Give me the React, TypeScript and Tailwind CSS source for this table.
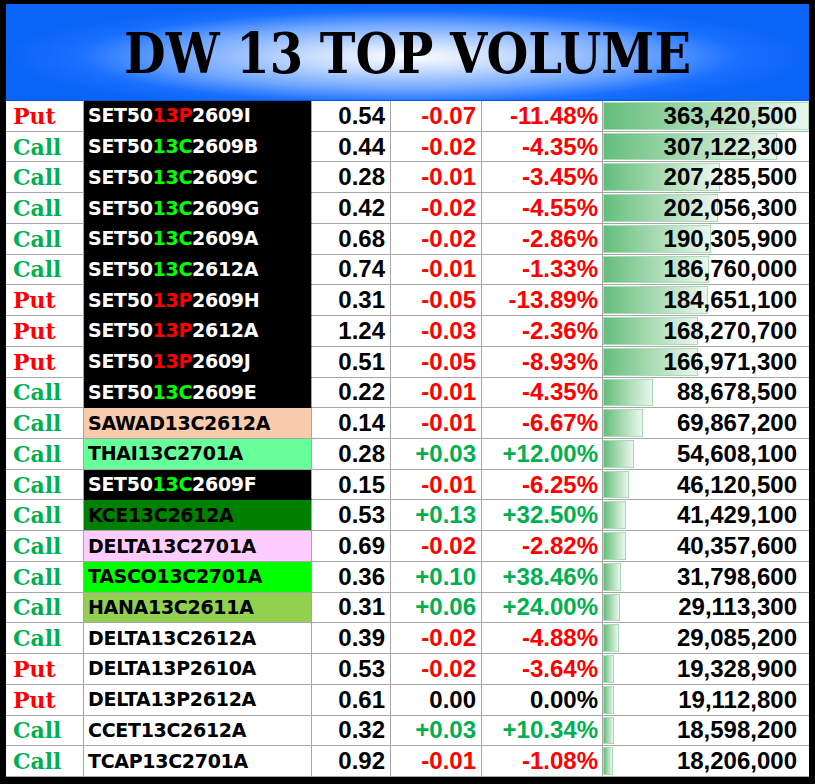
import React from 'react';

interface Row {
  type: 'Put' | 'Call';
  name: string;
  price: string;
  change: string;
  pct: string;
  volume: number;
  bg?: string;
}

const rows: Row[] = [
  { type: 'Put', name: 'SET5013P2609I', price: '0.54', change: '-0.07', pct: '-11.48%', volume: 363420500 },
  { type: 'Call', name: 'SET5013C2609B', price: '0.44', change: '-0.02', pct: '-4.35%', volume: 307122300 },
  { type: 'Call', name: 'SET5013C2609C', price: '0.28', change: '-0.01', pct: '-3.45%', volume: 207285500 },
  { type: 'Call', name: 'SET5013C2609G', price: '0.42', change: '-0.02', pct: '-4.55%', volume: 202056300 },
  { type: 'Call', name: 'SET5013C2609A', price: '0.68', change: '-0.02', pct: '-2.86%', volume: 190305900 },
  { type: 'Call', name: 'SET5013C2612A', price: '0.74', change: '-0.01', pct: '-1.33%', volume: 186760000 },
  { type: 'Put', name: 'SET5013P2609H', price: '0.31', change: '-0.05', pct: '-13.89%', volume: 184651100 },
  { type: 'Put', name: 'SET5013P2612A', price: '1.24', change: '-0.03', pct: '-2.36%', volume: 168270700 },
  { type: 'Put', name: 'SET5013P2609J', price: '0.51', change: '-0.05', pct: '-8.93%', volume: 166971300 },
  { type: 'Call', name: 'SET5013C2609E', price: '0.22', change: '-0.01', pct: '-4.35%', volume: 88678500 },
  { type: 'Call', name: 'SAWAD13C2612A', price: '0.14', change: '-0.01', pct: '-6.67%', volume: 69867200, bg: 'bg-[#f8cbad]' },
  { type: 'Call', name: 'THAI13C2701A', price: '0.28', change: '+0.03', pct: '+12.00%', volume: 54608100, bg: 'bg-[#66ff99]' },
  { type: 'Call', name: 'SET5013C2609F', price: '0.15', change: '-0.01', pct: '-6.25%', volume: 46120500 },
  { type: 'Call', name: 'KCE13C2612A', price: '0.53', change: '+0.13', pct: '+32.50%', volume: 41429100, bg: 'bg-[#008000]' },
  { type: 'Call', name: 'DELTA13C2701A', price: '0.69', change: '-0.02', pct: '-2.82%', volume: 40357600, bg: 'bg-[#ffccff]' },
  { type: 'Call', name: 'TASCO13C2701A', price: '0.36', change: '+0.10', pct: '+38.46%', volume: 31798600, bg: 'bg-[#00ff00]' },
  { type: 'Call', name: 'HANA13C2611A', price: '0.31', change: '+0.06', pct: '+24.00%', volume: 29113300, bg: 'bg-[#92d050]' },
  { type: 'Call', name: 'DELTA13C2612A', price: '0.39', change: '-0.02', pct: '-4.88%', volume: 29085200 },
  { type: 'Put', name: 'DELTA13P2610A', price: '0.53', change: '-0.02', pct: '-3.64%', volume: 19328900 },
  { type: 'Put', name: 'DELTA13P2612A', price: '0.61', change: '0.00', pct: '0.00%', volume: 19112800 },
  { type: 'Call', name: 'CCET13C2612A', price: '0.32', change: '+0.03', pct: '+10.34%', volume: 18598200 },
  { type: 'Call', name: 'TCAP13C2701A', price: '0.92', change: '-0.01', pct: '-1.08%', volume: 18206000 },
];

const maxVolume = Math.max(...rows.map((r) => r.volume));

const changeColor = (v: string) => {
  if (v.startsWith('+')) return 'text-[#00b050]';
  if (v.startsWith('-')) return 'text-[#ff0000]';
  return 'text-black';
};

const NameCell: React.FC<{ row: Row }> = ({ row }) => {
  const isSet50 = row.name.startsWith('SET50');
  if (isSet50) {
    const mid = row.name.slice(5, 8);
    return (
      <div className="flex items-center pl-[4px] bg-black border-r border-r-[#a6a6a6] border-b border-b-black text-white font-['DejaVu_Sans',sans-serif] font-bold text-[19px] tracking-[-0.3px]">
        <span>SET50</span>
        <span className={row.type === 'Put' ? 'text-[#ff0000]' : 'text-[#00ff00]'}>{mid}</span>
        <span>{row.name.slice(8)}</span>
      </div>
    );
  }
  return (
    <div
      className={`flex items-center pl-[4px] border-r border-b border-[#a6a6a6] text-black font-['DejaVu_Sans',sans-serif] font-bold text-[19px] tracking-[-0.3px] ${
        row.bg ?? 'bg-white'
      }`}
    >
      {row.name}
    </div>
  );
};

export default function App() {
  return (
    <div className="w-[815px] h-[784px] bg-black pt-[4px] pl-[6px] pr-[6px] pb-[7px] flex flex-col overflow-hidden">
      <div className="shrink-0 h-[97px] flex items-center justify-center border-b border-[#0a55d8] bg-[radial-gradient(ellipse_50%_58%_at_50%_55%,#ffffff_0%,#c4dafe_26%,#6fa6ff_58%,#1a70ff_82%,#0a64f5_100%)]">
        <h1 className="font-['DejaVu_Serif',serif] font-bold text-[48px] leading-none text-black scale-y-[1.15] mt-[2px]">
          DW 13 TOP VOLUME
        </h1>
      </div>
      <div className="flex-1 min-h-0 grid grid-rows-[repeat(22,minmax(0,1fr))] bg-white leading-none">
        {rows.map((row, i) => (
          <div key={i} className="grid grid-cols-[78px_228px_79px_91px_121px_206px] min-h-0">
            <div
              className={`flex items-center pl-[7px] border-r border-b border-[#a6a6a6] font-['DejaVu_Serif',serif] font-bold text-[22px] ${
                row.type === 'Put' ? 'text-[#ff0000]' : 'text-[#00b050]'
              }`}
            >
              {row.type}
            </div>
            <NameCell row={row} />
            <div className="flex items-center justify-end pr-[5px] border-r border-b border-[#a6a6a6] font-['Liberation_Sans',Arial,sans-serif] font-bold text-[24px] text-black">
              {row.price}
            </div>
            <div
              className={`flex items-center justify-end pr-[5px] border-r border-b border-[#a6a6a6] font-['Liberation_Sans',Arial,sans-serif] font-bold text-[24px] ${changeColor(row.change)}`}
            >
              {row.change}
            </div>
            <div
              className={`flex items-center justify-end pr-[4px] border-r border-b border-[#a6a6a6] font-['Liberation_Sans',Arial,sans-serif] font-bold text-[24px] ${changeColor(row.pct)}`}
            >
              {row.pct}
            </div>
            <div className="relative flex items-center justify-end pr-[12px] border-b border-[#a6a6a6] font-['Liberation_Sans',Arial,sans-serif] font-bold text-[24px] text-black">
              <div
                className="absolute left-0 top-[1px] bottom-[1px] bg-gradient-to-r from-[#63be7b] to-[#eaf6ed] border border-[#a8dbb6]"
                style={{ width: `${(row.volume / maxVolume) * 100}%` }}
              />
              <span className="relative">{row.volume.toLocaleString('en-US')}</span>
            </div>
          </div>
        ))}
      </div>
    </div>
  );
}
